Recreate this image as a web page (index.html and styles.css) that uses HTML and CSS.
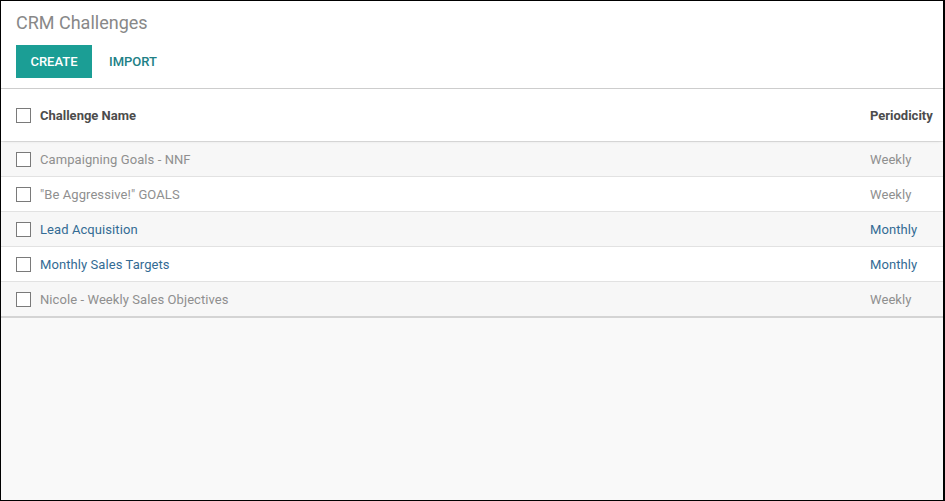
FILE: index.html
```html
<!DOCTYPE html>
<html>
<head>
<meta charset="utf-8">
<link rel="stylesheet" href="styles.css">
</head>
<body>
<div class="frame">
  <div class="control-panel">
    <h1 class="title">CRM Challenges</h1>
    <div class="buttons">
      <button class="btn-primary">CREATE</button>
      <button class="btn-link">IMPORT</button>
    </div>
  </div>
  <div class="content">
    <div class="list">
      <div class="row head">
        <span class="cb"></span>
        <span class="name">Challenge Name</span>
        <span class="period">Periodicity</span>
      </div>
      <div class="row odd muted">
        <span class="cb"></span>
        <span class="name">Campaigning Goals - NNF</span>
        <span class="period">Weekly</span>
      </div>
      <div class="row muted">
        <span class="cb"></span>
        <span class="name">"Be Aggressive!" GOALS</span>
        <span class="period">Weekly</span>
      </div>
      <div class="row odd active">
        <span class="cb"></span>
        <span class="name">Lead Acquisition</span>
        <span class="period">Monthly</span>
      </div>
      <div class="row active">
        <span class="cb"></span>
        <span class="name">Monthly Sales Targets</span>
        <span class="period">Monthly</span>
      </div>
      <div class="row odd muted last">
        <span class="cb"></span>
        <span class="name">Nicole - Weekly Sales Objectives</span>
        <span class="period">Weekly</span>
      </div>
    </div>
  </div>
</div>
</body>
</html>
```
FILE: styles.css
```css
* { box-sizing: border-box; }
html, body { margin: 0; padding: 0; }
body {
  width: 945px;
  height: 501px;
  font-family: Roboto, "Liberation Sans", sans-serif;
  font-size: 13px;
}
.frame {
  width: 945px;
  height: 501px;
  border: 1px solid #000;
  border-right-width: 2px;
  display: flex;
  flex-direction: column;
  background: #f9f9f9;
}
.control-panel {
  background: #fff;
  padding: 10px 15px 10px 15px;
  border-bottom: 1px solid #cdcdcd;
  height: 88px;
}
.title {
  margin: 0;
  font-size: 18px;
  font-weight: 400;
  line-height: 24px;
  color: #888;
}
.buttons {
  display: flex;
  align-items: center;
  margin-top: 10px;
}
.btn-primary {
  background: #1b9e95;
  color: #fff;
  border: none;
  height: 33px;
  width: 76px;
  font-family: Roboto, "Liberation Sans", sans-serif;
  font-size: 13px;
  font-weight: 500;
  padding: 0;
}
.btn-link {
  background: none;
  border: none;
  color: #217f86;
  font-family: Roboto, "Liberation Sans", sans-serif;
  font-size: 13px;
  font-weight: 500;
  margin-left: 17px;
  padding: 0;
}
.content { flex: 1; }
.list {
  border-bottom: 2px solid #d4d4d4;
}
.row {
  display: flex;
  align-items: center;
  height: 35px;
  padding: 0 11px 0 15px;
  border-top: 1px solid #e2e2e2;
  background: #fff;
  letter-spacing: 0.08px;
}
.row.odd { background: #f7f7f7; }
.row.head {
  height: 52px;
  border-top: none;
  background: #fff;
  font-weight: 700;
  color: #4c4c4c;
  letter-spacing: 0;
  box-shadow: 0 2px 3px -2px rgba(0,0,0,0.15);
  position: relative;
}
.cb {
  width: 15px;
  height: 15px;
  border: 1px solid #7a7a7a;
  background: #fff;
  flex: none;
}
.name { margin-left: 9px; flex: 1; }
.period { width: 62px; flex: none; white-space: nowrap; }
.muted { color: #8f8f8f; }
.active { color: #336b94; }
```
